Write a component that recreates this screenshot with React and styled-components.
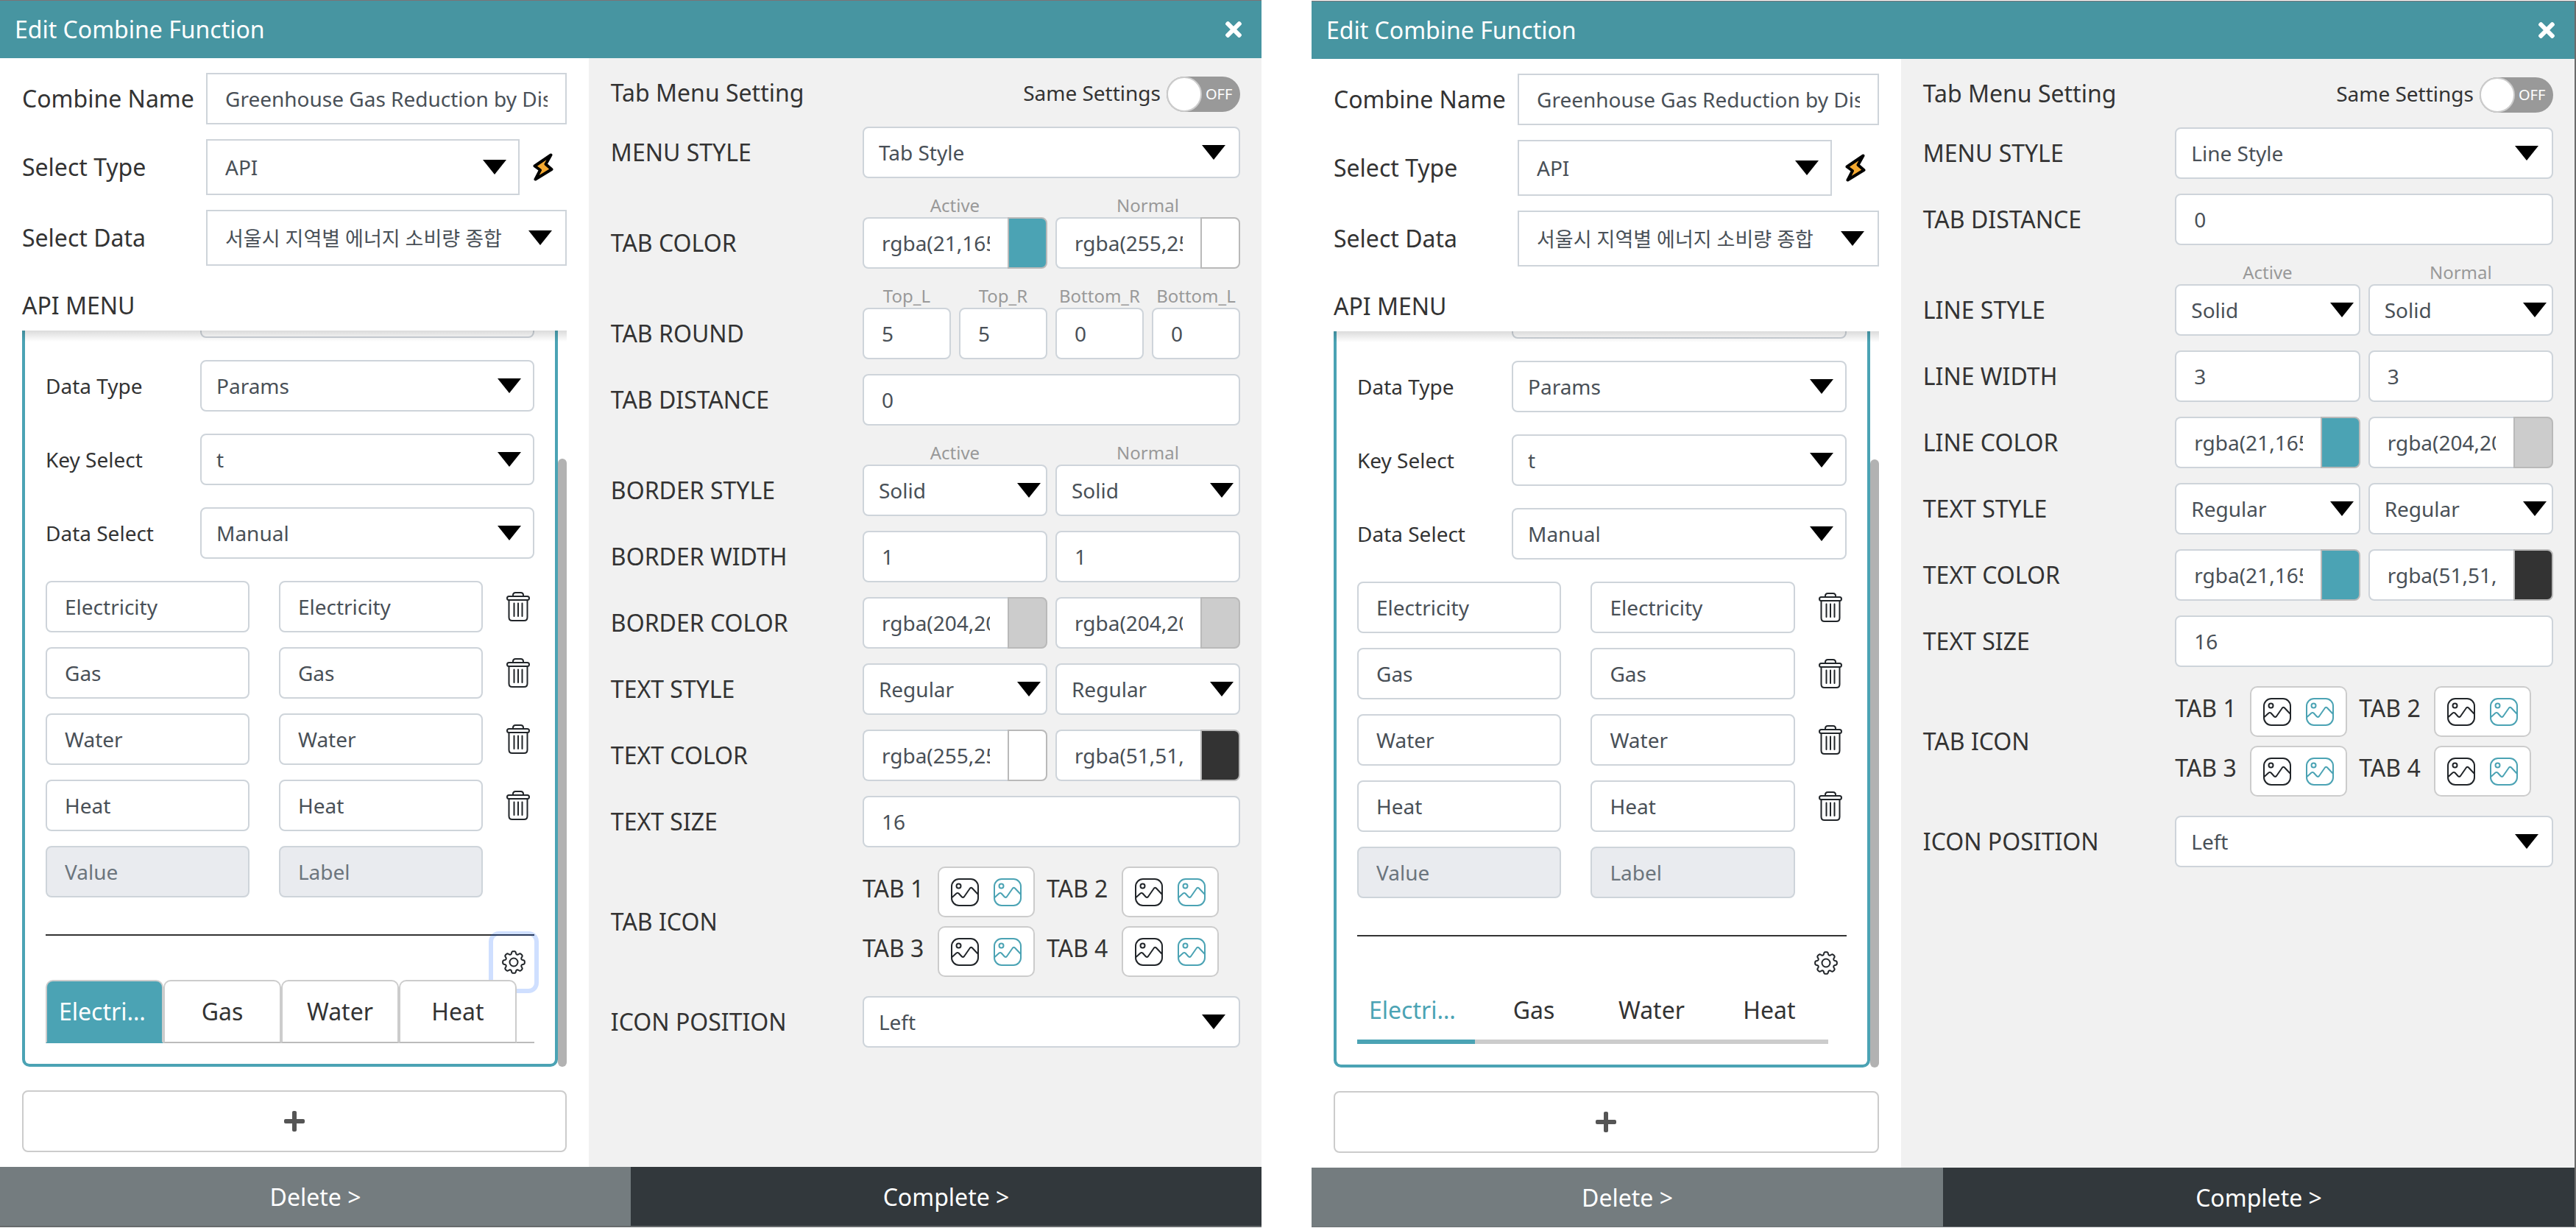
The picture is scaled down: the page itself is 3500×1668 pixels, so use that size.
import React, { useId } from "react";
import styled, { createGlobalStyle, css } from "styled-components";
import { FaTimes, FaPlus } from "react-icons/fa";

const color = {
  header: "#4795a1",
  teal: "#4ba3b4",
  text: "#333",
  field: "#495057",
  fieldBorder: "#ced4da",
  line: "#ccc",
};

const GlobalStyle = createGlobalStyle`
  *, *::before, *::after { box-sizing: border-box; }
  body { margin: 0; background: #fff; }
  body, input, select, button {
    font-family: "Noto Sans", "Noto Sans CJK KR", sans-serif;
  }
  button { cursor: pointer; }
`;

const Page = styled.main`
  display: grid;
  grid-template-columns: 857fr 859fr;
  column-gap: 68px;
  align-items: start;
  color: ${color.text};
  font-size: 32px;
  line-height: 44px;
`;

const Dialog = styled.section`
  display: flex;
  flex-direction: column;
  border-top: 1px solid #7c7376;
  ${(p) =>
    p.$framed
      ? css`
          margin-top: 1px;
          border-right: 2px solid #6b6b6b;
          border-bottom: 1px solid #6b6f72;
        `
      : css`
          border-bottom: 2px solid #666a6c;
          box-shadow: 0 1px 0 #222;
        `}
`;

const TitleBar = styled.header`
  display: flex;
  align-items: center;
  justify-content: space-between;
  height: 78px;
  padding: 0 22px 0 20px;
  background: ${color.header};
  color: #fff;
`;

const Title = styled.h1`
  margin: 0;
  font-size: 32px;
  font-weight: 400;
`;

const CloseButton = styled.button`
  display: flex;
  padding: 0;
  border: 0;
  background: none;
  color: #fff;
  font-size: 32px;
`;

const Body = styled.div`
  display: grid;
  grid-template-columns: 7fr 8fr;
`;

const Source = styled.div`
  display: flex;
  flex-direction: column;
  gap: 20px;
  min-width: 0;
  padding: 20px 30px;
`;

const SourceRow = styled.div`
  display: grid;
  grid-template-columns: 250px minmax(0, 1fr) auto;
  align-items: center;
`;

const Label = styled.label`
  white-space: nowrap;
`;

const SmallLabel = styled.label`
  font-size: 28px;
  white-space: nowrap;
`;

const fieldBox = css`
  display: block;
  width: 100%;
  min-width: 0;
  height: ${(p) => (p.$tall ? 76 : 70)}px;
  border: 2px solid ${color.fieldBorder};
  border-radius: ${(p) => (p.$square ? 0 : 8)}px;
  background: #fff;
  color: ${color.field};
  font-size: 28px;
`;

const TextInput = styled.input`
  ${fieldBox}
  padding: 0 24px;
  &::placeholder {
    color: #6c757d;
    opacity: 1;
  }
  &:disabled {
    background: #e9ebef;
  }
`;

const SelectWrap = styled.div`
  position: relative;
  min-width: 0;
`;

const SelectBox = styled.select`
  ${fieldBox}
  padding: 0 0 0 ${(p) => (p.$square ? 24 : 20)}px;
  appearance: none;
  &:lang(ko) {
    font-size: 27px;
  }
`;

const Arrow = styled.svg`
  position: absolute;
  top: 50%;
  right: ${(p) => p.$inset}px;
  width: 32px;
  height: 20px;
  margin-top: -10px;
  pointer-events: none;
`;

function Select({ value, inset = 20, ...rest }) {
  return (
    <SelectWrap>
      <SelectBox defaultValue={value} {...rest}>
        <option value={value}>{value}</option>
      </SelectBox>
      <Arrow $inset={inset} viewBox="0 0 32 20" aria-hidden="true">
        <path d="M0 0H32L16 20Z" fill="#000" />
      </Arrow>
    </SelectWrap>
  );
}

const BoltButton = styled.button`
  display: flex;
  width: 64px;
  padding: 0 0 0 18px;
  border: 0;
  background: none;
`;

const MenuHeading = styled.h2`
  display: flex;
  align-items: center;
  height: 68px;
  margin: 0;
  font-size: 32px;
  font-weight: 400;
`;

const MenuSection = styled.div`
  display: flex;
  flex-direction: column;
`;

const ScrollArea = styled.div`
  position: relative;
  display: flex;
  overflow: hidden;
  margin-bottom: 12px;
`;

const ScrollShade = styled.div`
  position: absolute;
  top: 0;
  left: 0;
  right: 0;
  height: 15px;
  background: linear-gradient(rgba(0, 0, 0, 0.14), rgba(0, 0, 0, 0));
`;

const ScrollTrack = styled.div`
  display: flex;
  width: 12px;
  padding-top: 174px;
`;

const ScrollThumb = styled.div`
  flex: 1;
  border-radius: 6px;
  background: #b2b2b2;
`;

const Card = styled.div`
  flex: 1;
  min-width: 0;
  padding: 0 28px 28px;
  border: 4px solid ${color.teal};
  border-top: 0;
  border-radius: 0 0 10px 10px;
`;

const CardRows = styled.div`
  display: flex;
  flex-direction: column;
  gap: 30px;
  margin-top: -60px;
`;

const CardRow = styled.div`
  display: grid;
  grid-template-columns: 210px minmax(0, 1fr);
  align-items: center;
`;

const Items = styled.div`
  display: flex;
  flex-direction: column;
  gap: 20px;
  padding-bottom: 50px;
  border-bottom: 2px solid ${color.text};
`;

const ItemRow = styled.div`
  display: grid;
  grid-template-columns: minmax(0, 1fr) minmax(0, 1fr) 30px;
  column-gap: 40px;
  align-items: center;
`;

const ItemDelete = styled.button`
  display: flex;
  justify-content: center;
  width: 32px;
  margin-left: -8px;
  padding: 0;
  border: 0;
  background: none;
`;

const CardTools = styled.div`
  display: flex;
  justify-content: flex-end;
`;

const GearButton = styled.button`
  display: flex;
  align-items: center;
  justify-content: center;
  width: 56px;
  height: 72px;
  padding: 0;
  border: 0;
  border-radius: 8px;
  background: none;
  box-shadow: ${(p) => (p.$focused ? "0 0 0 6px rgba(15, 95, 255, 0.2)" : "none")};
`;

const TabList = styled.div`
  display: flex;
  height: 86px;
  margin-top: -12px;
  box-shadow: ${(p) => (p.$variant === "tab" ? "inset 0 -2px 0 #bbb" : "none")};
`;

const tabVariants = {
  tab: css`
    border: 2px solid ${color.line};
    border-bottom-color: ${(p) => (p.$active ? color.teal : "#bbb")};
    border-radius: 10px 10px 0 0;
    background: ${(p) => (p.$active ? color.teal : "#fff")};
    color: ${(p) => (p.$active ? "#fff" : color.text)};
  `,
  line: css`
    border: 0;
    border-bottom: 6px solid ${(p) => (p.$active ? color.teal : color.line)};
    background: none;
    color: ${(p) => (p.$active ? color.teal : color.text)};
  `,
};

const Tab = styled.button`
  flex: 0 1 160px;
  min-width: 0;
  padding: 0 16px;
  font-size: 32px;
  line-height: 44px;
  text-align: center;
  text-overflow: ellipsis;
  white-space: nowrap;
  overflow: hidden;
  ${(p) => tabVariants[p.$variant]}
`;

const AddButton = styled.button`
  display: flex;
  align-items: center;
  justify-content: center;
  height: 84px;
  border: 2px solid ${color.line};
  border-radius: 8px;
  background: #fff;
  color: #555;
  font-size: 32px;
`;

const Settings = styled.div`
  display: flex;
  flex-direction: column;
  gap: 20px;
  min-width: 0;
  padding: 20px 29px 20px 30px;
  background: #f1f1f1;
`;

const SettingsHead = styled.div`
  display: flex;
  align-items: center;
  justify-content: space-between;
  height: 53px;
`;

const SettingsTitle = styled.h2`
  margin: 0;
  font-size: 32px;
  font-weight: 400;
`;

const SwitchLabel = styled.label`
  display: flex;
  align-items: center;
  align-self: stretch;
  gap: 8px;
  font-size: 28px;
`;

const SwitchTrack = styled.span`
  display: flex;
  align-items: center;
  align-self: flex-end;
  gap: 5px;
  width: 100px;
  height: 48px;
  border-radius: 24px;
  background: #999;
  color: #fff;
  font-size: 20px;
`;

const SwitchKnob = styled.input`
  flex: none;
  width: 48px;
  height: 48px;
  margin: 0;
  border: 2px solid ${color.line};
  border-radius: 50%;
  background: #fff;
  appearance: none;
`;

const SettingRow = styled.div`
  display: grid;
  grid-template-columns: 2fr 3fr;
  align-items: end;
`;

const SettingLabel = styled.div`
  display: flex;
  align-items: center;
  height: ${(p) => (p.$fill ? "100%" : "70px")};
`;

const Columns = styled.div`
  display: grid;
  grid-template-columns: repeat(${(p) => p.$count}, minmax(0, 1fr));
  column-gap: 11px;
`;

const Column = styled.div`
  display: flex;
  flex-direction: column;
  min-width: 0;
`;

const ColumnHead = styled.div`
  color: #999;
  font-size: 24px;
  line-height: 33px;
  text-align: center;
  white-space: nowrap;
`;

const ColorField = styled.div`
  display: grid;
  grid-template-columns: minmax(0, 1fr) 54px;
`;

const ColorInput = styled(TextInput)`
  border-right: 0;
  border-radius: 8px 0 0 8px;
`;

const Swatch = styled.button`
  padding: 0;
  border: 2px solid #b9b9b9;
  border-radius: 0 8px 8px 0;
  background: ${(p) => p.$fill};
`;

const IconGrid = styled.div`
  display: grid;
  grid-template-columns: repeat(2, 234px);
  gap: 12px 16px;
  padding: 6px 0;
`;

const IconItem = styled.div`
  display: grid;
  grid-template-columns: 102px 132px;
`;

const IconName = styled.span`
  padding-top: 8px;
  white-space: nowrap;
`;

const IconBox = styled.div`
  display: flex;
  align-items: center;
  justify-content: center;
  gap: 20px;
  height: 69px;
  border: 2px solid ${color.line};
  border-radius: 10px;
  background: #fff;
`;

const IconButton = styled.button`
  display: flex;
  padding: 0;
  border: 0;
  background: none;
  color: ${(p) => (p.$active ? color.teal : "#212529")};
`;

const Footer = styled.footer`
  display: grid;
  grid-template-columns: 1fr 1fr;
`;

const FooterButton = styled.button`
  height: 80px;
  border: 0;
  background: ${(p) => (p.$primary ? "#32383c" : "#747c7f")};
  color: #fff;
  font-size: 32px;
`;

const gearPath = (() => {
  const steps = 128;
  let d = "";
  for (let i = 0; i < steps; i += 1) {
    const a = (i / steps) * Math.PI * 2;
    const r = 13 + 1.9 * Math.tanh(1.9 * (Math.cos(8 * a) + 0.25));
    const x = (16 + r * Math.sin(a)).toFixed(2);
    const y = (16 - r * Math.cos(a)).toFixed(2);
    d += `${i ? "L" : "M"}${x} ${y}`;
  }
  return `${d}Z`;
})();

const GearIcon = () => (
  <svg width="32" height="32" viewBox="0 0 32 32" fill="none" stroke="#212529" strokeWidth="2" strokeLinejoin="round">
    <path d={gearPath} />
    <circle cx="16" cy="16" r="5.5" />
  </svg>
);

const TrashIcon = () => (
  <svg width="32" height="40" viewBox="0 0 32 40" fill="none" stroke="#212529" strokeWidth="2" strokeLinecap="round">
    <path d="M9 6V4.5Q9 1 12.5 1H19.500Q23 1 23 4.500V6" />
    <rect x="1" y="6" width="30" height="5" rx="2.500" />
    <path d="M3.500 11V34.500Q3.500 39 8 39H24Q28.500 39 28.500 34.500V11" />
    <path d="M10.500 15.500V33M16 15.500V33M21.500 15.500V33" />
  </svg>
);

const BoltIcon = () => (
  <svg width="28" height="38" viewBox="0 0 28 38">
    <path
      d="M24.500 2.500L2.500 17.500L10 23L3.500 35.500L25.500 22L17.500 15Z"
      fill="#f5a930"
      stroke="#000"
      strokeWidth="4"
      strokeLinejoin="round"
    />
  </svg>
);

const PictureIcon = () => (
  <svg width="38" height="38" viewBox="0 0 38 38" fill="none" stroke="currentColor" strokeWidth="2" strokeLinejoin="round">
    <rect x="1" y="1" width="36" height="36" rx="10" />
    <circle cx="10.500" cy="10.500" r="3" />
    <path d="M1.500 26L7.500 20.500Q9 19.500 10.500 20.500L15 25.500Q16.500 26.500 18 25L26 13.500Q27.500 12 29 13.500L37 22" />
  </svg>
);

const TEAL = "rgba(21,165,180,1)";
const GREY = "rgba(204,204,204,1)";
const WHITE = "rgba(255,255,255,1)";
const DARK = "rgba(51,51,51,1)";
const swatches = { [TEAL]: color.teal, [GREY]: "#ccc", [WHITE]: "#fff", [DARK]: "#333" };

const pair = ["Active", "Normal"];

const tabStyleRows = [
  { label: "MENU STYLE", kind: "select", values: ["Tab Style"] },
  { label: "TAB COLOR", kind: "color", heads: pair, values: [TEAL, WHITE] },
  { label: "TAB ROUND", kind: "text", heads: ["Top_L", "Top_R", "Bottom_R", "Bottom_L"], values: ["5", "5", "0", "0"] },
  { label: "TAB DISTANCE", kind: "text", values: ["0"] },
  { label: "BORDER STYLE", kind: "select", heads: pair, values: ["Solid", "Solid"] },
  { label: "BORDER WIDTH", kind: "text", values: ["1", "1"] },
  { label: "BORDER COLOR", kind: "color", values: [GREY, GREY] },
  { label: "TEXT STYLE", kind: "select", values: ["Regular", "Regular"] },
  { label: "TEXT COLOR", kind: "color", values: [WHITE, DARK] },
  { label: "TEXT SIZE", kind: "text", values: ["16"] },
  { label: "TAB ICON", kind: "icons" },
  { label: "ICON POSITION", kind: "select", values: ["Left"] },
];

const lineStyleRows = [
  { label: "MENU STYLE", kind: "select", values: ["Line Style"] },
  { label: "TAB DISTANCE", kind: "text", values: ["0"] },
  { label: "LINE STYLE", kind: "select", heads: pair, values: ["Solid", "Solid"] },
  { label: "LINE WIDTH", kind: "text", values: ["3", "3"] },
  { label: "LINE COLOR", kind: "color", values: [TEAL, GREY] },
  { label: "TEXT STYLE", kind: "select", values: ["Regular", "Regular"] },
  { label: "TEXT COLOR", kind: "color", values: [TEAL, DARK] },
  { label: "TEXT SIZE", kind: "text", values: ["16"] },
  { label: "TAB ICON", kind: "icons" },
  { label: "ICON POSITION", kind: "select", values: ["Left"] },
];

const menuItems = ["Electricity", "Gas", "Water", "Heat"];

function Field({ kind, value, many, ...rest }) {
  if (kind === "select") return <Select value={value} inset={many ? 9 : 20} {...rest} />;
  if (kind === "color") {
    return (
      <ColorField>
        <ColorInput defaultValue={value} {...rest} />
        <Swatch type="button" $fill={swatches[value]} aria-label={`Pick ${rest["aria-label"] || "color"}`} />
      </ColorField>
    );
  }
  return <TextInput defaultValue={value} {...rest} />;
}

function TabIcons() {
  return (
    <IconGrid>
      {[1, 2, 3, 4].map((n) => (
        <IconItem key={n}>
          <IconName>TAB {n}</IconName>
          <IconBox>
            <IconButton type="button" aria-label={`Tab ${n} normal icon`}>
              <PictureIcon />
            </IconButton>
            <IconButton type="button" $active aria-label={`Tab ${n} active icon`}>
              <PictureIcon />
            </IconButton>
          </IconBox>
        </IconItem>
      ))}
    </IconGrid>
  );
}

function Setting({ label, kind, heads, values }) {
  const id = useId();
  if (kind === "icons") {
    return (
      <SettingRow>
        <SettingLabel $fill>{label}</SettingLabel>
        <TabIcons />
      </SettingRow>
    );
  }
  return (
    <SettingRow>
      <SettingLabel as="label" htmlFor={`${id}-0`}>
        {label}
      </SettingLabel>
      <Columns $count={values.length}>
        {values.map((value, i) => (
          <Column key={i}>
            {heads && <ColumnHead>{heads[i]}</ColumnHead>}
            <Field
              kind={kind}
              value={value}
              many={values.length > 1}
              id={`${id}-${i}`}
              aria-label={values.length > 1 ? `${label} ${(heads || pair)[i]}` : undefined}
            />
          </Column>
        ))}
      </Columns>
    </SettingRow>
  );
}

function CardSelect({ label, value }) {
  const id = useId();
  return (
    <CardRow>
      <SmallLabel htmlFor={id}>{label}</SmallLabel>
      <Select id={id} value={value} inset={18} />
    </CardRow>
  );
}

function CombineDialog({ variant, rows, gearFocused, framed }) {
  const id = useId();
  return (
    <Dialog $framed={framed}>
      <TitleBar>
        <Title>Edit Combine Function</Title>
        <CloseButton type="button" aria-label="Close">
          <FaTimes />
        </CloseButton>
      </TitleBar>
      <Body>
        <Source>
          <SourceRow>
            <Label htmlFor={`${id}-name`}>Combine Name</Label>
            <TextInput id={`${id}-name`} $square defaultValue="Greenhouse Gas Reduction by District" />
          </SourceRow>
          <SourceRow>
            <Label htmlFor={`${id}-type`}>Select Type</Label>
            <Select id={`${id}-type`} $square $tall value="API" inset={18} />
            <BoltButton type="button" aria-label="Run">
              <BoltIcon />
            </BoltButton>
          </SourceRow>
          <SourceRow>
            <Label htmlFor={`${id}-data`}>Select Data</Label>
            <Select id={`${id}-data`} $square $tall lang="ko" value="서울시 지역별 에너지 소비량 종합" />
          </SourceRow>
          <MenuSection>
            <MenuHeading>API MENU</MenuHeading>
            <ScrollArea>
              <Card>
                <CardRows>
                  <CardSelect label="" value="" />
                  <CardSelect label="Data Type" value="Params" />
                  <CardSelect label="Key Select" value="t" />
                  <CardSelect label="Data Select" value="Manual" />
                  <Items>
                    {menuItems.map((item) => (
                      <ItemRow key={item}>
                        <TextInput defaultValue={item} aria-label={`${item} value`} />
                        <TextInput defaultValue={item} aria-label={`${item} label`} />
                        <ItemDelete type="button" aria-label={`Delete ${item}`}>
                          <TrashIcon />
                        </ItemDelete>
                      </ItemRow>
                    ))}
                    <ItemRow>
                      <TextInput disabled placeholder="Value" aria-label="Value" />
                      <TextInput disabled placeholder="Label" aria-label="Label" />
                    </ItemRow>
                  </Items>
                </CardRows>
                <CardTools>
                  <GearButton type="button" $focused={gearFocused} aria-label="Tab menu settings">
                    <GearIcon />
                  </GearButton>
                </CardTools>
                <TabList role="tablist" $variant={variant}>
                  {menuItems.map((item, i) => (
                    <Tab key={item} type="button" role="tab" aria-selected={i === 0} $variant={variant} $active={i === 0}>
                      {item}
                    </Tab>
                  ))}
                </TabList>
              </Card>
              <ScrollTrack>
                <ScrollThumb />
              </ScrollTrack>
              <ScrollShade />
            </ScrollArea>
          </MenuSection>
          <AddButton type="button" aria-label="Add menu">
            <FaPlus />
          </AddButton>
        </Source>
        <Settings>
          <SettingsHead>
            <SettingsTitle>Tab Menu Setting</SettingsTitle>
            <SwitchLabel>
              Same Settings
              <SwitchTrack>
                <SwitchKnob type="checkbox" role="switch" />
                OFF
              </SwitchTrack>
            </SwitchLabel>
          </SettingsHead>
          {rows.map((row) => (
            <Setting key={row.label} {...row} />
          ))}
        </Settings>
      </Body>
      <Footer>
        <FooterButton type="button">Delete &gt;</FooterButton>
        <FooterButton type="button" $primary>
          Complete &gt;
        </FooterButton>
      </Footer>
    </Dialog>
  );
}

export default function App() {
  return (
    <>
      <GlobalStyle />
      <Page>
        <CombineDialog variant="tab" rows={tabStyleRows} gearFocused />
        <CombineDialog variant="line" rows={lineStyleRows} framed />
      </Page>
    </>
  );
}
